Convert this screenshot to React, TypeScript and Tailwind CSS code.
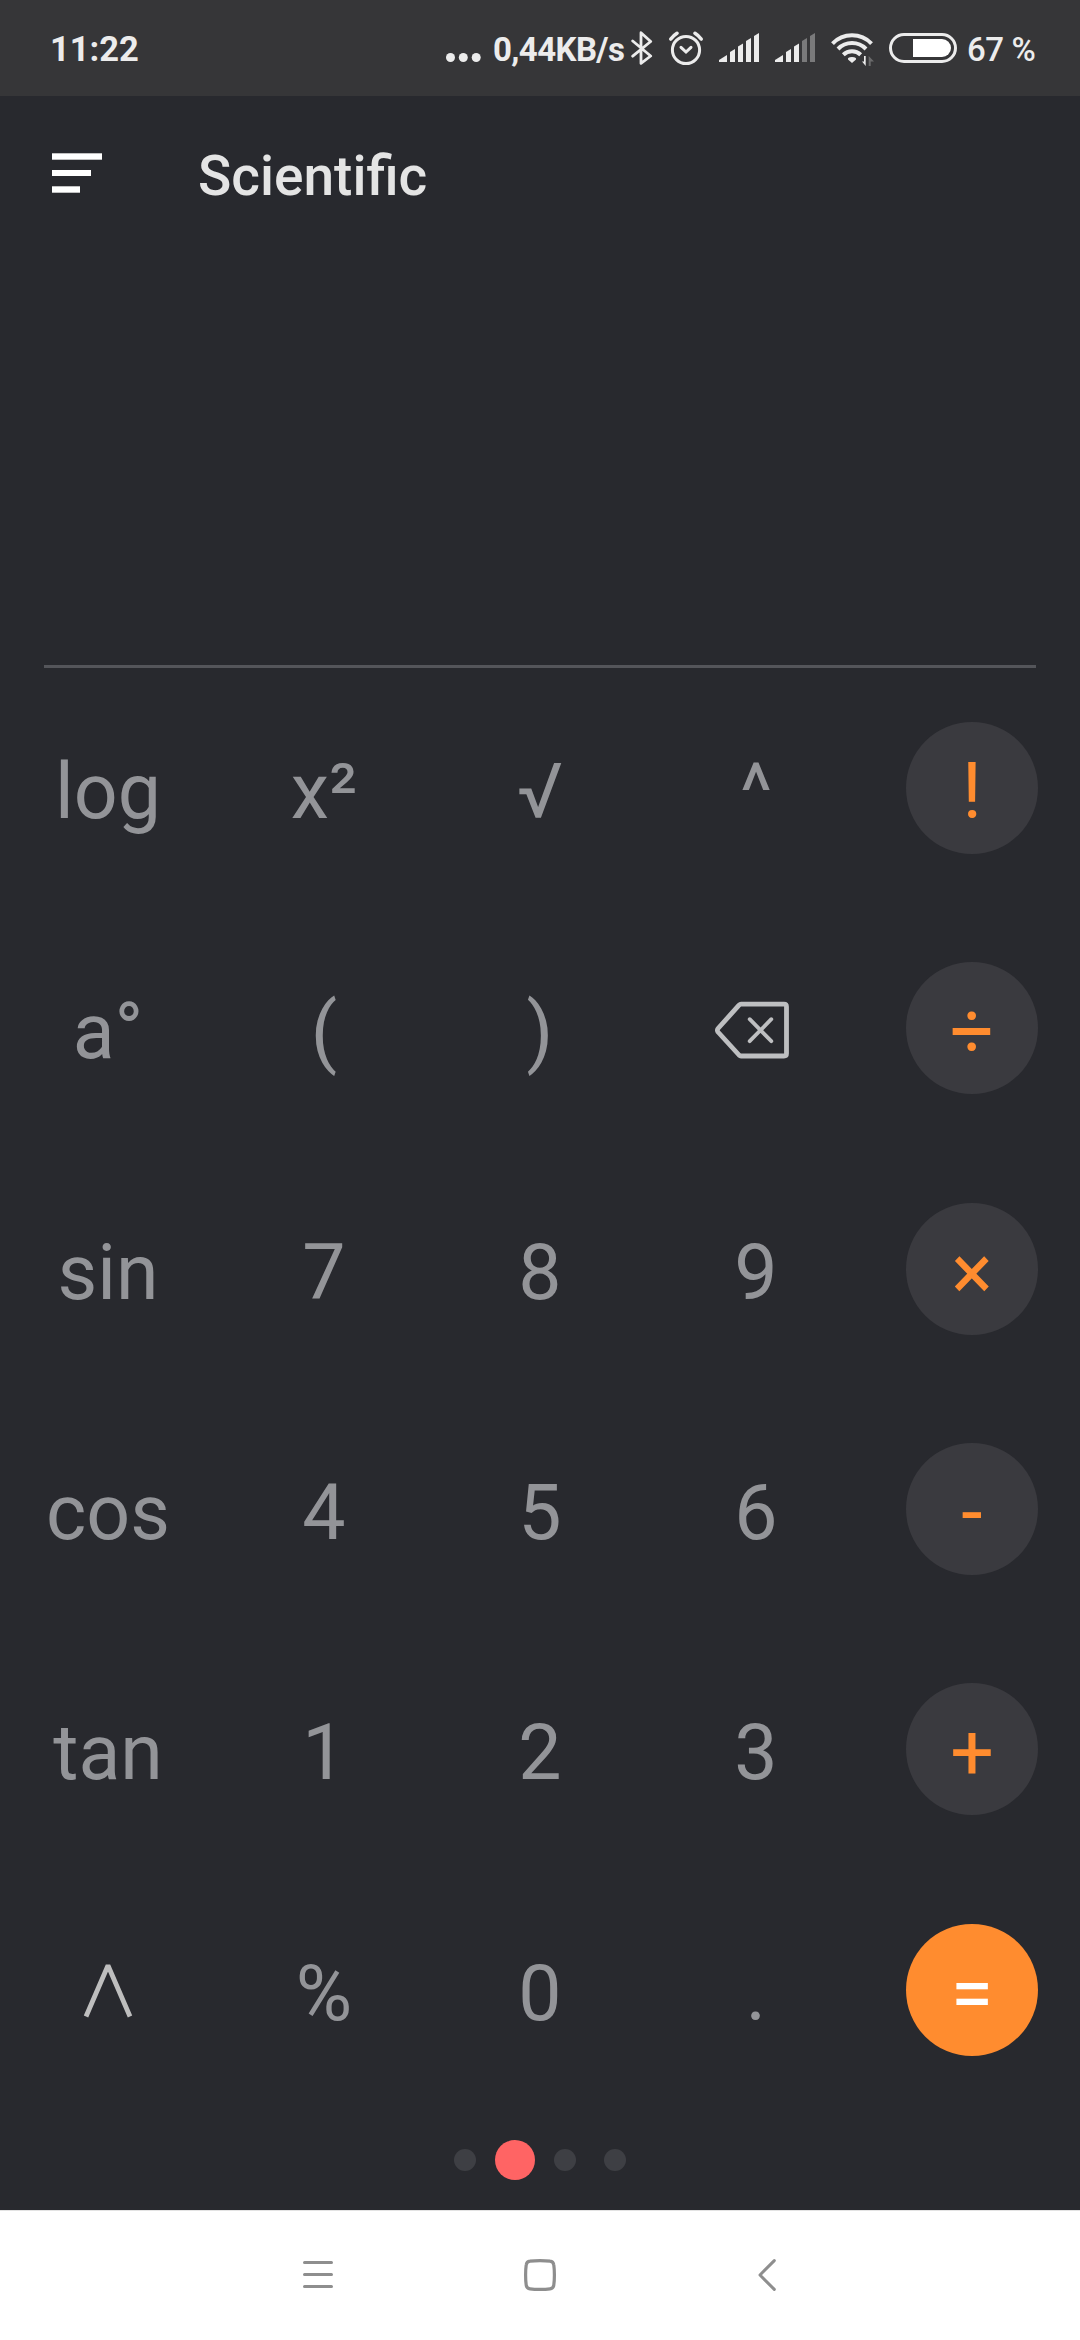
import clsx from "clsx";
import { ReactNode } from "react";

function SignalIcon({ bars }: { bars: number }) {
  const shapes = [
    "M0 34 V32 L8 27 V34 Z",
    "M11 34 V24 L16 21 V34 Z",
    "M19 34 V18.5 L24 15.5 V34 Z",
    "M27 34 V13 L32 10 V34 Z",
    "M35 34 V8 L40 5 V34 Z",
  ];

  return (
    <svg className="h-10 w-[41px]" viewBox="0 0 41 40">
      {shapes.map((d, i) => (
        <path key={d} d={d} fill={i < bars ? "#ececec" : "#7a7a7b"} />
      ))}
    </svg>
  );
}

function StatusBar() {
  return (
    <div className="flex h-24 items-center bg-[#363638] pl-[50px] text-[#ececec]">
      <div className="w-[396px] pt-[3px] text-[34.5px] leading-none font-bold">
        11:22
      </div>
      <svg className="h-10 w-[35px]" viewBox="0 0 35 40" fill="#ececec">
        <circle cx="4.5" cy="29.5" r="4.5" />
        <circle cx="17.3" cy="29.5" r="4.5" />
        <circle cx="30.2" cy="29.5" r="4.5" />
      </svg>
      <div className="ml-3 w-[138px] pt-[2px] text-[33px] leading-none font-bold tracking-[-0.6px] whitespace-nowrap">
        0,44KB/s
      </div>
      <svg
        className="h-10 w-[22px]"
        viewBox="0 0 22 40"
        fill="none"
        stroke="#ececec"
        strokeWidth="2.8"
        strokeLinejoin="round"
        strokeLinecap="round"
      >
        <path d="M1.7 13 L19.7 28 L10 35.3 V4.7 L19.7 13.5 L1.7 28.2" />
      </svg>
      <svg
        className="ml-[15px] h-10 w-9"
        viewBox="0 0 36 40"
        fill="none"
        stroke="#ececec"
        strokeWidth="3"
        strokeLinecap="round"
      >
        <circle cx="18" cy="22" r="13.6" />
        <path d="M2.8 11 Q5.5 7.5 9 5.3" strokeWidth="3.6" />
        <path d="M33.2 11 Q30.5 7.5 27 5.3" strokeWidth="3.6" />
        <path d="M13 19.3 L18 24 L23 19.3" />
      </svg>
      <div className="ml-[15px] flex gap-[15px]">
        <SignalIcon bars={5} />
        <SignalIcon bars={3} />
      </div>
      <svg
        className="ml-[15px] h-10 w-11"
        viewBox="0 0 44 40"
        fill="none"
        stroke="#ececec"
        strokeWidth="4"
      >
        <path d="M1.5 15.6 A27 27 0 0 1 40.5 15.6" />
        <path d="M7 21 A19.5 19.5 0 0 1 35 21" />
        <path d="M12.3 26.8 A12.5 12.5 0 0 1 29.7 26.8" />
        <path
          d="M21 35 L17 31.5 Q16.2 29 21 29 Q25.8 29 25 31.5 Z"
          fill="#ececec"
          stroke="none"
        />
        <path d="M34.7 28 V38 L31 33.5 H33 V28 Z" fill="#ececec" stroke="none" />
        <path d="M37.7 38 V28 L43 33.5 H39.7 V38 Z" fill="#6a6a6b" stroke="none" />
      </svg>
      <div className="ml-[14px] flex h-[30px] w-[68px] items-center justify-end rounded-full border-3 border-[#ececec] pr-[3px]">
        <div className="h-[18px] w-[38px] rounded-l-[1px] rounded-r-full bg-white" />
      </div>
      <div className="ml-[10px] pt-[2px] text-[33px] leading-none font-medium tracking-[-0.4px] whitespace-nowrap">
        67 %
      </div>
    </div>
  );
}

function MenuIcon() {
  return (
    <svg className="h-10 w-[50px]" viewBox="0 0 50 40" fill="white">
      <rect y="0.3" width="50" height="6.4" />
      <rect y="17" width="39" height="6" />
      <rect y="33.3" width="28" height="6.4" />
    </svg>
  );
}

function BackspaceIcon() {
  return (
    <svg
      className="mr-2 h-[58px] w-[76px]"
      viewBox="0 0 76 58"
      fill="none"
      stroke="#bebfc1"
      strokeWidth="4.8"
      strokeLinejoin="round"
      strokeLinecap="round"
    >
      <path d="M27 3.2 H70 Q72.5 3.2 72.5 5.7 V52.5 Q72.5 55 70 55 H27 Q26 55 25 54 L4 31 Q2.8 29.3 4 27.5 L25 4.2 Q26 3.2 27 3.2 Z" />
      <path d="M35.7 18.2 L57.3 40.2 M57.3 18.2 L35.7 40.2" strokeWidth="3.8" />
    </svg>
  );
}

function ExpandIcon() {
  return (
    <svg
      className="h-[54px] w-[50px]"
      viewBox="0 0 50 54"
      fill="none"
      stroke="#bebebe"
      strokeWidth="4.8"
      strokeLinejoin="bevel"
    >
      <path d="M3 52.5 L25 1.5 L47 52.5" />
    </svg>
  );
}

const rows: { keys: ReactNode[]; operator: string }[] = [
  { keys: ["log", "x²", "√", "^"], operator: "!" },
  { keys: ["a°", "(", ")", <BackspaceIcon />], operator: "÷" },
  { keys: ["sin", "7", "8", "9"], operator: "×" },
  { keys: ["cos", "4", "5", "6"], operator: "-" },
  { keys: ["tan", "1", "2", "3"], operator: "+" },
  { keys: [<ExpandIcon />, "%", "0", "."], operator: "=" },
];

function Keypad() {
  return (
    <div className="grid h-[1442px] grid-rows-6 text-[77px] leading-[90px] text-[#939498]">
      {rows.map(({ keys, operator }) => (
        <div key={operator} className="grid grid-cols-5 items-center">
          {keys.map((key, i) => (
            <button
              key={i}
              className={clsx(
                "flex items-center justify-center",
                typeof key === "string" ? "pt-2" : "pt-[3px]"
              )}
            >
              {key}
            </button>
          ))}
          <button
            className={clsx(
              "flex size-[132px] items-center justify-center justify-self-center rounded-full pt-2",
              operator === "="
                ? "bg-[#ff8c2f] text-white"
                : "bg-[#3a3a3f] text-[#ff8c2f]"
            )}
          >
            {operator}
          </button>
        </div>
      ))}
    </div>
  );
}

function PageDots({ active }: { active: number }) {
  return (
    <div className="flex h-[100px] items-center justify-center">
      {[0, 1, 2, 3].map((page) => (
        <div key={page} className="flex w-[50px] justify-center">
          <div
            className={clsx(
              "rounded-full",
              page === active ? "size-10 bg-[#ff6464]" : "size-[22px] bg-[#3e3f44]"
            )}
          />
        </div>
      ))}
    </div>
  );
}

function NavigationBar() {
  return (
    <div className="flex h-[130px] items-center border-t border-[#e3e3e3] bg-white pb-px pl-[303px]">
      <svg
        className="h-8 w-[30px]"
        viewBox="0 0 30 32"
        stroke="#8e8e8e"
        strokeWidth="3"
        strokeLinecap="round"
      >
        <path d="M1.5 3.5 H28.5 M1.5 15.5 H28.5 M1.5 27.5 H28.5" />
      </svg>
      <svg
        className="ml-[191px] h-8 w-8"
        viewBox="0 0 32 32"
        fill="none"
        stroke="#8e8e8e"
        strokeWidth="3.2"
      >
        <path d="M16 1.6 Q22 1.6 26 2.2 Q29.4 2.6 29.8 6 Q30.4 10 30.4 16 Q30.4 22 29.8 26 Q29.4 29.4 26 29.8 Q22 30.4 16 30.4 Q10 30.4 6 29.8 Q2.6 29.4 2.2 26 Q1.6 22 1.6 16 Q1.6 10 2.2 6 Q2.6 2.6 6 2.2 Q10 1.6 16 1.6 Z" />
      </svg>
      <svg
        className="ml-[202px] h-8 w-[18px]"
        viewBox="0 0 18 32"
        fill="none"
        stroke="#8e8e8e"
        strokeWidth="3"
        strokeLinecap="round"
        strokeLinejoin="round"
      >
        <path d="M16.3 1.6 L2 16 L16.3 30.4" />
      </svg>
    </div>
  );
}

export default function App() {
  return (
    <div className="flex h-[2340px] w-[1080px] flex-col overflow-hidden bg-[#28292e] font-[Roboto,sans-serif]">
      <StatusBar />
      <header className="flex h-[160px] items-center pl-[52px]">
        <div className="w-[146px] pb-[6px]">
          <MenuIcon />
        </div>
        <h1 className="text-[55px] leading-none font-medium text-[#e4e4e4]">
          Scientific
        </h1>
      </header>
      <div className="mx-11 h-[412px] border-b-3 border-[#54555a]" />
      <Keypad />
      <PageDots active={1} />
      <NavigationBar />
    </div>
  );
}
